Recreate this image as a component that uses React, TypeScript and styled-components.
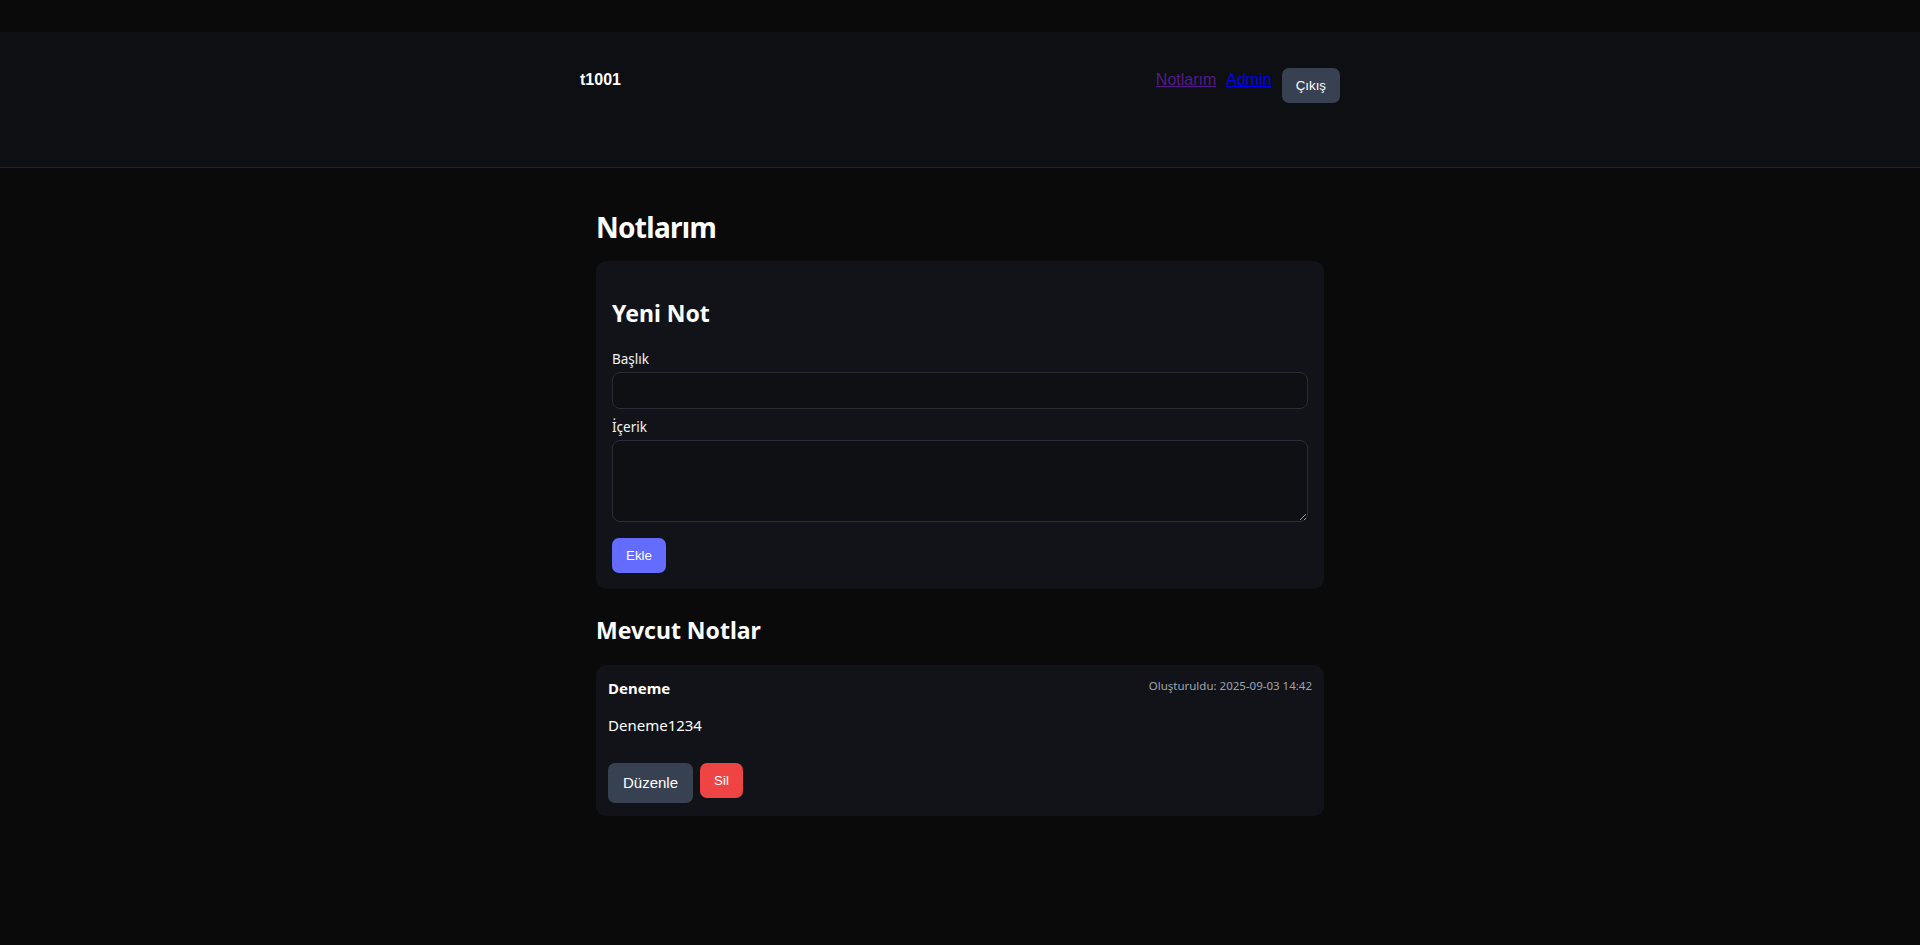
import React from "react";
import styled, { createGlobalStyle } from "styled-components";

const GlobalStyle = createGlobalStyle`
  html, body { margin: 0; padding: 0; background: #0a0a0a; }
  body {
    color: #e5e7eb;
    font-family: "Noto Sans", "Open Sans", sans-serif;
    line-height: 1.5;
  }
  * { box-sizing: border-box; }
`;

const Page = styled.div`
  min-height: 945px;
  padding-top: 32px;
  background: #0a0a0a;
`;

const Header = styled.header`
  height: 136px;
  background: #0e0f13;
  border-bottom: 1px solid #1e2130;
`;

const HeaderInner = styled.div`
  width: 760px;
  margin: 0 auto;
  padding-top: 36px;
  display: flex;
  justify-content: space-between;
  align-items: flex-start;
  font-family: "Liberation Sans", Arial, sans-serif;
`;

const Brand = styled.div`
  font-size: 16px;
  font-weight: 700;
  line-height: 24px;
  color: #ffffff;
`;

const Nav = styled.nav`
  display: flex;
  align-items: flex-start;
  gap: 10px;
`;

const NavLink = styled.a<{ $visited?: boolean }>`
  font-size: 16px;
  line-height: 24px;
  color: ${(p) => (p.$visited ? "#551a8b" : "#0000ee")};
  text-decoration: underline;
`;

const SmallButton = styled.button<{ $tone: "gray" | "blue" | "red" }>`
  font-family: "Liberation Sans", Arial, sans-serif;
  font-size: 13.333px;
  line-height: 19px;
  padding: 8px 14px;
  border: none;
  border-radius: 7px;
  color: #ffffff;
  cursor: pointer;
  background: ${(p) =>
    p.$tone === "blue" ? "#646cff" : p.$tone === "red" ? "#ef4444" : "#374151"};
`;

const BigButton = styled.button`
  font-family: "Liberation Sans", Arial, sans-serif;
  font-size: 15px;
  line-height: 22px;
  padding: 9px 15px;
  border: none;
  border-radius: 7px;
  color: #ffffff;
  background: #374151;
  cursor: pointer;
`;

const Main = styled.main`
  width: 728px;
  margin: 0 auto;
  padding-top: 42px;
`;

const PageTitle = styled.h1`
  margin: 0 0 17px;
  font-size: 28px;
  line-height: 34px;
  font-weight: 700;
  letter-spacing: -0.7px;
  color: #ffffff;
`;

const Card = styled.section<{ $pad: string }>`
  background: #121318;
  border-radius: 10px;
  padding: ${(p) => p.$pad};
`;

const SectionTitle = styled.h2<{ $top: number; $bottom: number }>`
  margin: ${(p) => p.$top}px 0 ${(p) => p.$bottom}px;
  font-size: 23px;
  line-height: 30px;
  font-weight: 700;
  color: #ffffff;
`;

const Field = styled.div`
  display: flex;
  flex-direction: column;
  gap: 3px;
  margin-bottom: 8px;
`;

const Label = styled.label`
  font-size: 13.5px;
  line-height: 20px;
  color: #f3f4f6;
`;

const TextInput = styled.input`
  height: 37px;
  width: 100%;
  background: #0f1014;
  border: 1px solid #2a2d38;
  border-radius: 8px;
  color: #e5e7eb;
  padding: 0 10px;
  font: inherit;
  outline: none;
`;

const TextArea = styled.textarea`
  height: 82px;
  width: 100%;
  background: #0f1014;
  border: 1px solid #2a2d38;
  border-radius: 8px;
  color: #e5e7eb;
  padding: 8px 10px;
  font: inherit;
  outline: none;
  display: block;
`;

const FormActions = styled.div`
  margin-top: 16px;
  display: flex;
`;

const NoteHead = styled.div`
  display: flex;
  justify-content: space-between;
  align-items: flex-start;
`;

const NoteTitle = styled.div`
  font-size: 15px;
  line-height: 22px;
  font-weight: 700;
  color: #ffffff;
`;

const NoteDate = styled.div`
  font-size: 11.5px;
  line-height: 18px;
  color: #9ca3af;
`;

const NoteBody = styled.p`
  margin: 15px 0 0;
  font-size: 15px;
  line-height: 22px;
  color: #ffffff;
`;

const NoteActions = styled.div`
  margin-top: 27px;
  display: flex;
  align-items: flex-start;
  gap: 7px;
`;

export default function App() {
  return (
    <Page>
      <GlobalStyle />
      <Header>
        <HeaderInner>
          <Brand>t1001</Brand>
          <Nav>
            <NavLink href="#" $visited>
              Notlarım
            </NavLink>
            <NavLink href="#">Admin</NavLink>
            <SmallButton $tone="gray">Çıkış</SmallButton>
          </Nav>
        </HeaderInner>
      </Header>
      <Main>
        <PageTitle>Notlarım</PageTitle>
        <Card $pad="16px">
          <SectionTitle $top={21} $bottom={21}>
            Yeni Not
          </SectionTitle>
          <Field>
            <Label>Başlık</Label>
            <TextInput type="text" />
          </Field>
          <Field>
            <Label>İçerik</Label>
            <TextArea />
          </Field>
          <FormActions>
            <SmallButton $tone="blue">Ekle</SmallButton>
          </FormActions>
        </Card>
        <SectionTitle $top={26} $bottom={20}>
          Mevcut Notlar
        </SectionTitle>
        <Card $pad="12px 12px 13px">
          <NoteHead>
            <NoteTitle>Deneme</NoteTitle>
            <NoteDate>Oluşturuldu: 2025-09-03 14:42</NoteDate>
          </NoteHead>
          <NoteBody>Deneme1234</NoteBody>
          <NoteActions>
            <BigButton>Düzenle</BigButton>
            <SmallButton $tone="red">Sil</SmallButton>
          </NoteActions>
        </Card>
      </Main>
    </Page>
  );
}
